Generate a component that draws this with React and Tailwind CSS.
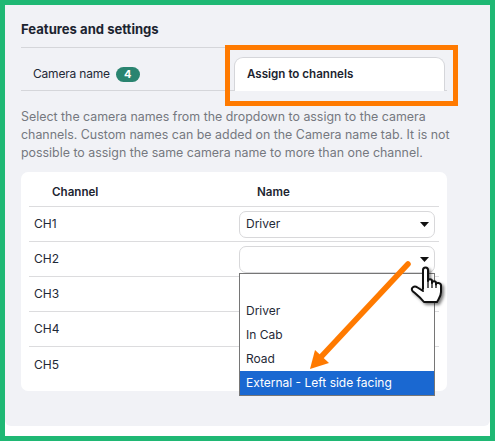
import React from 'react';

const channels = [
    { id: 'CH1', value: 'Driver' },
    { id: 'CH2', value: '', open: true },
    { id: 'CH3', value: '' },
    { id: 'CH4', value: '' },
    { id: 'CH5', value: '' },
];

const options = ['', 'Driver', 'In Cab', 'Road'];

const Caret = () => (
    <svg width="9" height="5" viewBox="0 0 9 5" className="shrink-0">
        <path d="M0 0H9L4.5 5Z" fill="#111" />
    </svg>
);

const SelectBox = ({ value, open }) => (
    <div className="relative w-[196px]">
        <div className="flex h-[27px] items-center justify-between rounded-[7px] border border-[#d8d8da] bg-white pl-[6px] pr-[5px] text-[12px] text-[#1f2937]">
            <span>{value}</span>
            <Caret />
        </div>
        {open && (
            <div className="absolute left-0 top-[27px] z-10 w-[196px] border border-[#767676] bg-white pt-[1px] text-[12px] text-[#1f2937]">
                {options.map((option) => (
                    <div key={option || 'empty'} className="flex h-[24px] items-center pl-[6px]">{option}</div>
                ))}
                <div className="flex h-[24px] items-center bg-[#1a68d1] pl-[6px] text-white">External - Left side facing</div>
            </div>
        )}
    </div>
);

const Arrow = () => (
    <svg className="absolute left-[300px] top-[255px] z-20" width="120" height="125" viewBox="0 0 120 125">
        <path d="M108 9L20 103" stroke="#ff7a00" strokeWidth="5.5" strokeLinecap="round" fill="none" />
        <path d="M10 114L15 95L29 108Z" fill="#ff7a00" />
    </svg>
);

const HandCursor = () => (
    <svg className="absolute left-[410px] top-[265px] z-30 drop-shadow-[2px_2px_1.5px_rgba(0,0,0,0.5)]" width="36" height="40" viewBox="-1 -1 36 40">
        <path
            d="M12 23V4C12 0.5 17 0.5 17 4V15C17 12.5 21 12.5 21 15V17C21 14.5 25 14.5 25 17V18.5C25 16 30 16.5 30 19.5V26C30 30 28 32 26 36H13C9 31 5 28 1.5 25C-0.5 22 3 19 6.5 21.5L12 25"
            fill="#fff"
            stroke="#111"
            strokeWidth="2"
            strokeLinejoin="round"
            strokeLinecap="round"
        />
        <path d="M17 15V22M21 17V22M25 18.5V22" stroke="#111" strokeWidth="1.3" fill="none" />
    </svg>
);

const App = () => {
    return (
        <div className="relative h-[441px] w-[495px] overflow-hidden border-[5px] border-[#1fb874] bg-white font-['Inter',sans-serif]">
            <div className="h-[421px] w-[485px] rounded-b-[6px] bg-[#f1f2f6] pl-[16px] pt-[14px]">
                <h1 className="h-[28px] pt-[1px] text-[13.1px] font-bold leading-[18px] text-[#1c2430]">Features and settings</h1>

                <div className="w-[426px] border-t border-[#d5d6da]">
                    <div className="flex h-[43px] items-end border-b border-[#d5d6da]">
                        <div className="flex h-[33px] w-[213px] items-center gap-[6px] pl-[12px] pt-[1px]">
                            <span className="text-[12px] tracking-[-0.2px] text-[#1f2937]">Camera name</span>
                            <span className="flex h-[15px] w-[24px] items-center justify-center rounded-full bg-[#2a8470] text-[11px] font-bold text-white">4</span>
                        </div>
                        <div className="-mb-[1px] flex h-[34px] w-[211px] items-center rounded-t-[9px] border border-b-0 border-[#d5d6da] bg-white pl-[12px] text-[11.6px] font-semibold text-[#1c2430]">
                            Assign to channels
                        </div>
                    </div>
                </div>

                <p className="mt-[17px] w-[432px] text-[12.4px] leading-[18px] text-[#75787f]">
                    Select the camera names from the dropdown to assign to the camera channels. Custom names can be added on the Camera name tab. It is not possible to assign the same camera name to more than one channel.
                </p>

                <div className="mt-[10px] h-[219px] w-[426px] rounded-[7px] bg-white px-[8px]">
                    <div className="flex h-[35px] items-center border-b border-[#dcdcde] pt-[8px] text-[11.6px] font-semibold text-[#1c2430]">
                        <div className="w-[210px] pl-[23px]">Channel</div>
                        <div className="pl-[18px]">Name</div>
                    </div>
                    {channels.map((channel, i) => (
                        <div key={channel.id} className={`flex h-[35px] items-center text-[12px] text-[#1f2937] ${i < channels.length - 1 ? 'border-b border-[#dcdcde]' : ''}`}>
                            <div className="w-[210px] pl-[5px]">{channel.id}</div>
                            <SelectBox value={channel.value} open={channel.open} />
                        </div>
                    ))}
                </div>
            </div>

            <div className="pointer-events-none absolute left-[220px] top-[40px] h-[61px] w-[233px] border-[5px] border-[#ff7a00]" />
            <div className="absolute inset-[-5px]">
                <Arrow />
                <HandCursor />
            </div>
        </div>
    );
};

export default App;
